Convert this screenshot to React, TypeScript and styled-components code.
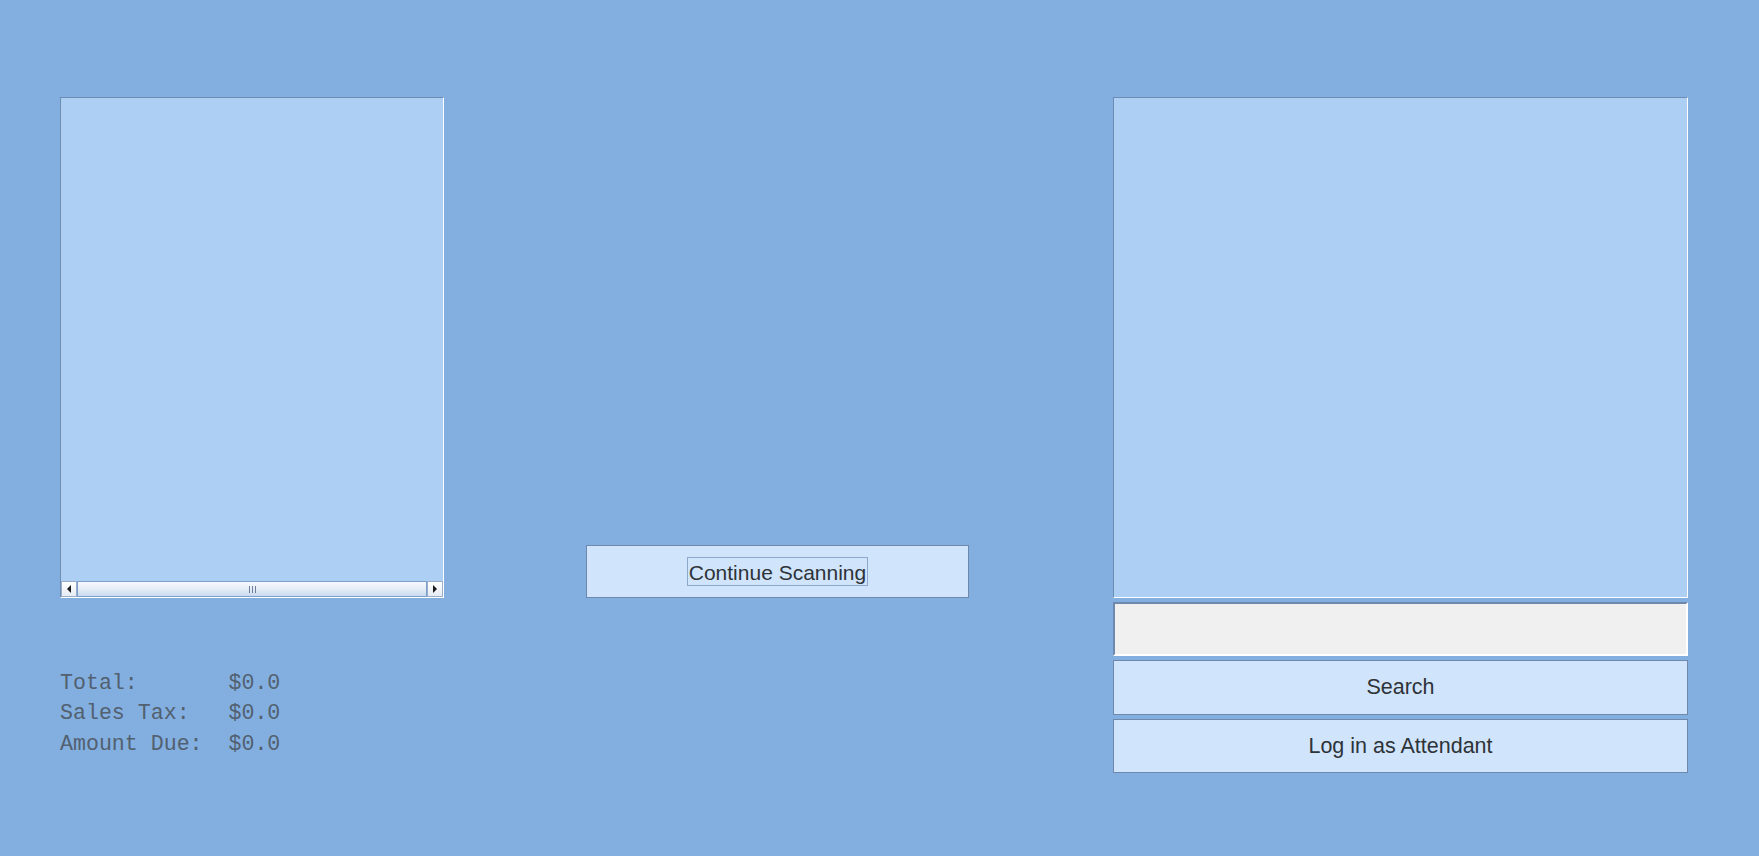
import React from "react";
import styled, { createGlobalStyle } from "styled-components";

const Global = createGlobalStyle`
  html, body { margin: 0; padding: 0; }
  body {
    background: #82afe0;
    width: 1759px;
    height: 856px;
    overflow: hidden;
    font-family: "Liberation Sans", Arial, sans-serif;
  }
`;

const Page = styled.div`
  display: flex;
  align-items: flex-start;
  padding: 97px 0 0 60px;
`;

const LeftColumn = styled.div`
  width: 384px;
  display: flex;
  flex-direction: column;
`;

const MiddleColumn = styled.div`
  width: 383px;
  margin-left: 142px;
  padding-top: 448px;
  display: flex;
  flex-direction: column;
`;

const RightColumn = styled.div`
  width: 575px;
  margin-left: 144px;
  display: flex;
  flex-direction: column;
`;

const ListBox = styled.div`
  height: 501px;
  box-sizing: border-box;
  background: #adcff4;
  border-top: 1px solid #6f8db3;
  border-left: 1px solid #6f8db3;
  border-right: 1px solid #ffffff;
  border-bottom: 1px solid #ffffff;
  display: flex;
  flex-direction: column;
  justify-content: flex-end;
`;

const ScrollBar = styled.div`
  height: 16px;
  display: flex;
  align-items: stretch;
  background: #e8eef8;
`;

const ArrowButton = styled.div`
  width: 16px;
  box-sizing: border-box;
  background: linear-gradient(#ffffff, #e6ecf5);
  border: 1px solid #9aaec8;
  display: flex;
  align-items: center;
  justify-content: center;
`;

const Thumb = styled.div`
  flex: 1;
  box-sizing: border-box;
  border: 1px solid #7d9fcc;
  background: linear-gradient(#f6f9fd 0%, #e7eef8 45%, #c9daf0 100%);
  display: flex;
  align-items: center;
  justify-content: center;
  gap: 2px;
`;

const Grip = styled.span`
  width: 1px;
  height: 7px;
  background: #6d7f99;
`;

const Totals = styled.div`
  margin-top: 70px;
  font-family: "Liberation Mono", "Courier New", monospace;
  font-size: 21.6px;
  line-height: 30.3px;
  color: #52606f;
  white-space: pre;
`;

const Button = styled.div<{ $h: number; $fs?: number }>`
  height: ${(p) => p.$h}px;
  box-sizing: border-box;
  background: #d0e5fc;
  border: 1px solid #6f89ad;
  display: flex;
  align-items: center;
  justify-content: center;
  font-size: ${(p) => p.$fs ?? 21.5}px;
  color: #2e3338;
`;

const FocusLabel = styled.span`
  outline: 1px solid #8fa9cc;
  padding: 3px 1px 0;
  line-height: 24px;
`;

const ResultPanel = styled(ListBox)`
  height: 501px;
`;

const TextField = styled.div`
  margin-top: 4px;
  height: 54px;
  box-sizing: border-box;
  background: #f0f0f0;
  border-top: 2px solid #6f89ad;
  border-left: 2px solid #6f89ad;
  border-right: 2px solid #ffffff;
  border-bottom: 2px solid #ffffff;
`;

const Spaced = styled.div<{ $mt: number }>`
  margin-top: ${(p) => p.$mt}px;
  display: flex;
  flex-direction: column;
`;

const Arrow = ({ dir }: { dir: "left" | "right" }) => (
  <svg width="6" height="8" viewBox="0 0 6 8">
    {dir === "left" ? (
      <polygon points="5,0 5,8 1,4" fill="#1a1a1a" />
    ) : (
      <polygon points="1,0 1,8 5,4" fill="#1a1a1a" />
    )}
  </svg>
);

export default function App() {
  return (
    <>
      <Global />
      <Page>
        <LeftColumn>
          <ListBox>
            <ScrollBar>
              <ArrowButton>
                <Arrow dir="left" />
              </ArrowButton>
              <Thumb>
                <Grip />
                <Grip />
                <Grip />
              </Thumb>
              <ArrowButton>
                <Arrow dir="right" />
              </ArrowButton>
            </ScrollBar>
          </ListBox>
          <Totals>
            {"Total:       $0.0\nSales Tax:   $0.0\nAmount Due:  $0.0"}
          </Totals>
        </LeftColumn>
        <MiddleColumn>
          <Button $h={53} $fs={21}>
            <FocusLabel>Continue Scanning</FocusLabel>
          </Button>
        </MiddleColumn>
        <RightColumn>
          <ResultPanel />
          <TextField />
          <Spaced $mt={4}>
            <Button $h={55}>Search</Button>
          </Spaced>
          <Spaced $mt={4}>
            <Button $h={54}>Log in as Attendant</Button>
          </Spaced>
        </RightColumn>
      </Page>
    </>
  );
}
